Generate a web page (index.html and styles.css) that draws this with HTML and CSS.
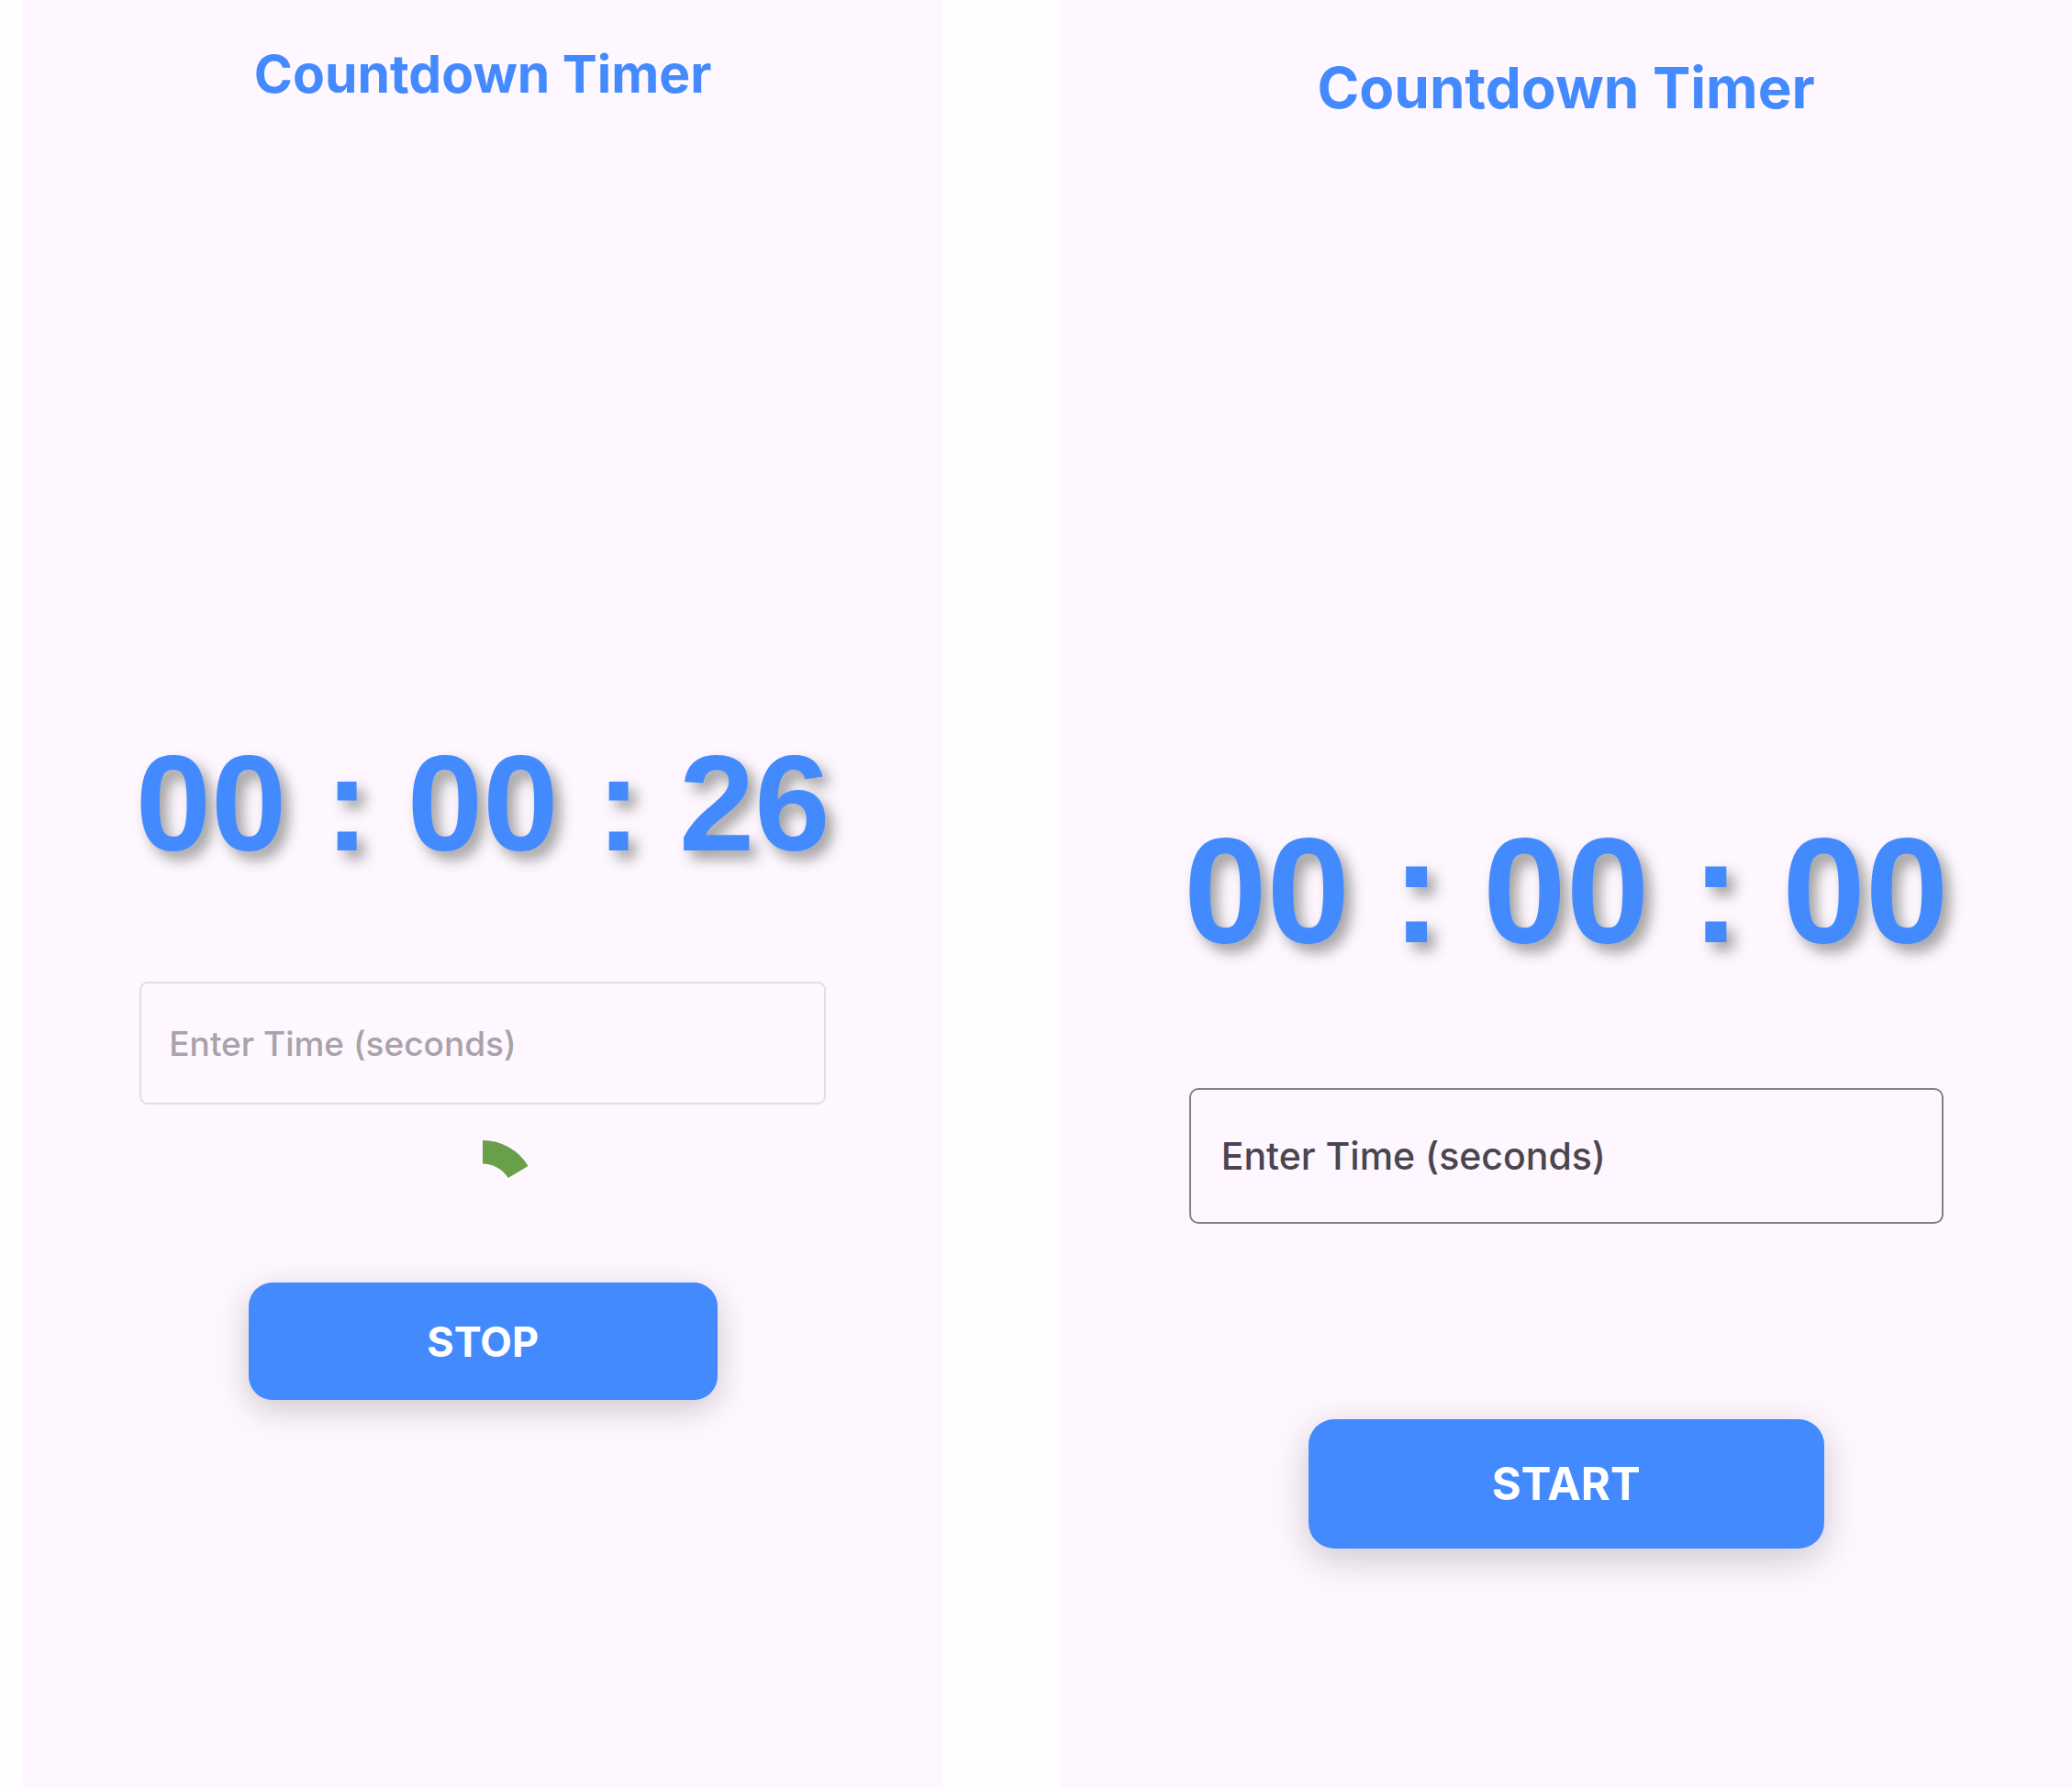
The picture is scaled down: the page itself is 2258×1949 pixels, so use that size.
FILE: index.html
```html
<!DOCTYPE html>
<html lang="en">
<head>
  <meta charset="utf-8">
  <meta name="viewport" content="width=device-width, initial-scale=1">
  <title>Countdown Timer</title>
  <link rel="stylesheet" href="styles.css">
</head>
<body>
  <main class="screens">
    <section class="screen screen--running">
      <h1 class="title">Countdown Timer</h1>
      <div class="clock" role="timer">00 : 00 : 26</div>
      <input class="field" type="text" inputmode="numeric" placeholder="Enter Time (seconds)" aria-label="Enter Time (seconds)" disabled>
      <div class="progress">
        <svg class="progress-ring" viewBox="0 0 116 116" role="img" aria-label="Time elapsed">
          <path d="M58 0A58 58 0 0 1 107.600 27.950L85.800 41.100A32.500 32.500 0 0 0 58 25.500Z" fill="#689f4b"/>
        </svg>
      </div>
      <button class="action" type="button">STOP</button>
    </section>

    <section class="screen screen--idle">
      <h1 class="title">Countdown Timer</h1>
      <div class="clock" role="timer">00 : 00 : 00</div>
      <input class="field" type="text" inputmode="numeric" placeholder="Enter Time (seconds)" aria-label="Enter Time (seconds)">
      <div class="progress"></div>
      <button class="action" type="button">START</button>
    </section>
  </main>
</body>
</html>
```
FILE: styles.css
```css
* {
  box-sizing: border-box;
}

body {
  margin: 0;
  background: #fefefe;
  font-family: Inter, "Liberation Sans", sans-serif;
}

.screens {
  display: grid;
  grid-template-columns: minmax(0, 10fr) minmax(0, 11fr);
  column-gap: 128px;
  min-height: 100vh;
  padding-left: 25px;
}

.screen {
  display: flex;
  flex-direction: column;
  align-items: center;
  background: #fef7ff;
}

.title {
  margin: 0;
  color: #448aff;
  font-weight: 700;
}

.clock {
  color: #448aff;
  font-family: "Liberation Sans", Arial, sans-serif;
  font-weight: 700;
  white-space: nowrap;
  text-shadow: 8px 9px 15px #9e9e9e;
}

.field {
  width: calc(74% + 6px);
  border: 2px solid #857f89;
  background: transparent;
  color: #4a454e;
  font-family: inherit;
  font-weight: 500;
}

.field::placeholder {
  color: #4a454e;
  opacity: 1;
}

.field:disabled {
  border-color: #e4dce6;
}

.field:disabled::placeholder {
  color: #a8a2aa;
}

.progress-ring {
  display: block;
  width: 100%;
  height: 100%;
}

.action {
  width: 51%;
  padding: 0;
  border: 0;
  background: #448aff;
  color: #fff;
  font-family: inherit;
  font-weight: 700;
}

/* Timer counting down */
.screen--running {
  padding-top: 41px;
}

.screen--running .title {
  font-size: 57px;
  line-height: 80px;
}

.screen--running .clock {
  margin-top: 671px;
  font-size: 148px;
  line-height: 168px;
}

.screen--running .field {
  height: 134px;
  margin-top: 110px;
  padding: 0 30px;
  border-radius: 9px;
  font-size: 37px;
}

.screen--running .progress {
  width: 116px;
  height: 116px;
  margin: 39px 0;
}

.screen--running .action {
  height: 128px;
  border-radius: 26px;
  box-shadow: 0 10px 36px rgba(0, 0, 0, 0.2);
  font-size: 45px;
}

/* Timer waiting for input */
.screen--idle {
  padding-top: 52px;
}

.screen--idle .title {
  font-size: 62px;
  line-height: 88px;
}

.screen--idle .clock {
  margin-top: 739px;
  font-size: 163px;
  line-height: 184px;
}

.screen--idle .field {
  height: 148px;
  margin-top: 123px;
  padding: 0 33px;
  border-radius: 10px;
  font-size: 41px;
}

.screen--idle .progress {
  width: 128px;
  height: 128px;
  margin: 43px 0 42px;
}

.screen--idle .action {
  height: 141px;
  border-radius: 28px;
  box-shadow: 0 11px 40px rgba(0, 0, 0, 0.2);
  font-size: 49px;
}
```
